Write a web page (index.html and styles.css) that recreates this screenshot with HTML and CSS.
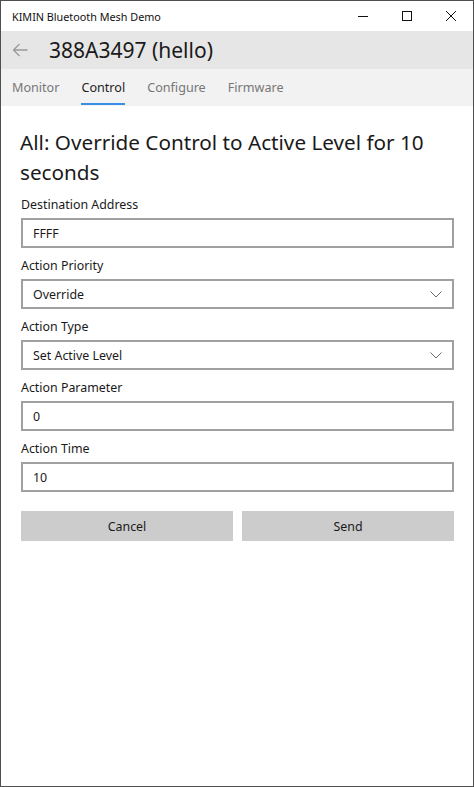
FILE: index.html
```html
<!DOCTYPE html>
<html>
<head>
<meta charset="utf-8">
<link rel="stylesheet" href="styles.css">
</head>
<body>
<div class="window">
  <div class="titlebar">
    <span class="app-title">KIMIN Bluetooth Mesh Demo</span>
    <div class="controls">
      <span class="ctl"><svg width="12" height="12" viewBox="0 0 12 12"><path d="M1 6.5h10" stroke="#111" stroke-width="1"/></svg></span>
      <span class="ctl"><svg width="12" height="12" viewBox="0 0 12 12"><rect x="1.5" y="1.5" width="9" height="9" fill="none" stroke="#111" stroke-width="1"/></svg></span>
      <span class="ctl"><svg width="12" height="12" viewBox="0 0 12 12"><path d="M1 1l10 10M11 1L1 11" stroke="#111" stroke-width="1"/></svg></span>
    </div>
  </div>
  <div class="header">
    <svg class="back" width="16" height="14" viewBox="0 0 16 14"><path d="M15.5 7H1.5M7.5 1L1.5 7l6 6" fill="none" stroke="#9a9a9a" stroke-width="1.3"/></svg>
    <span class="page-title">388A3497 (hello)</span>
  </div>
  <div class="tabs">
    <span class="tab">Monitor</span>
    <span class="tab active">Control</span>
    <span class="tab">Configure</span>
    <span class="tab">Firmware</span>
  </div>
  <div class="content">
    <h1 class="heading">All: Override Control to Active Level for 10 seconds</h1>
    <div class="field">
      <div class="label">Destination Address</div>
      <div class="box">FFFF</div>
    </div>
    <div class="field">
      <div class="label">Action Priority</div>
      <div class="box select">Override<svg class="chev" width="12" height="7" viewBox="0 0 12 7"><path d="M0.5 0.5l5.5 5.5 5.5-5.5" fill="none" stroke="#6b6b6b" stroke-width="1"/></svg></div>
    </div>
    <div class="field">
      <div class="label">Action Type</div>
      <div class="box select">Set Active Level<svg class="chev" width="12" height="7" viewBox="0 0 12 7"><path d="M0.5 0.5l5.5 5.5 5.5-5.5" fill="none" stroke="#6b6b6b" stroke-width="1"/></svg></div>
    </div>
    <div class="field">
      <div class="label">Action Parameter</div>
      <div class="box">0</div>
    </div>
    <div class="field">
      <div class="label">Action Time</div>
      <div class="box">10</div>
    </div>
    <div class="buttons">
      <button class="btn">Cancel</button>
      <button class="btn">Send</button>
    </div>
  </div>
</div>
</body>
</html>
```

FILE: styles.css
```css
* { box-sizing: border-box; }
html, body { margin: 0; padding: 0; }
body {
  width: 474px;
  height: 787px;
  font-family: "Noto Sans", "Open Sans", sans-serif;
  color: #1a1a1a;
  background: #fff;
}
.window {
  width: 474px;
  height: 787px;
  border: 1px solid #4f4f4f;
  display: flex;
  flex-direction: column;
  background: #fff;
}
.titlebar {
  height: 30px;
  display: flex;
  align-items: center;
  justify-content: space-between;
  padding-left: 11px;
}
.app-title {
  font-size: 10.8px;
  color: #111;
}
.controls {
  display: flex;
  height: 100%;
}
.ctl {
  width: 44px;
  display: flex;
  align-items: center;
  justify-content: center;
}
.header {
  height: 38px;
  background: #e6e6e6;
  display: flex;
  align-items: center;
  padding-left: 11px;
}
.back { margin-right: 21px; }
.page-title {
  font-size: 21px;
  color: #1a1a1a;
}
.tabs {
  height: 37px;
  background: #f2f2f2;
  display: flex;
  align-items: center;
  padding-left: 11px;
  gap: 22px;
}
.tab {
  font-size: 12.6px;
  color: #777;
  position: relative;
}
.tab.active { color: #1f1f1f; }
.tab.active::after {
  content: "";
  position: absolute;
  left: 0;
  right: 0;
  bottom: -9px;
  height: 2px;
  background: #3b8ee6;
}
.content {
  padding: 21px 19px 0 19px;
}
.heading {
  margin: 0 0 8px 0;
  font-size: 20.7px;
  font-weight: normal;
  line-height: 30px;
  color: #1a1a1a;
}
.field { margin-bottom: 8px; }
.label {
  font-size: 12.4px;
  line-height: 20px;
  margin-bottom: 3px;
  padding-left: 1px;
}
.box {
  height: 30px;
  border: 2px solid #a0a0a0;
  margin-left: 1px;
  padding: 0 10px;
  display: flex;
  align-items: center;
  justify-content: space-between;
  font-size: 12.4px;
}
.buttons {
  display: grid;
  grid-template-columns: 1fr 1fr;
  gap: 9px;
  margin-top: 19px;
  padding-left: 1px;
}
.btn {
  height: 30px;
  border: none;
  background: #cccccc;
  font-family: inherit;
  font-size: 12.4px;
  color: #1a1a1a;
}
```
